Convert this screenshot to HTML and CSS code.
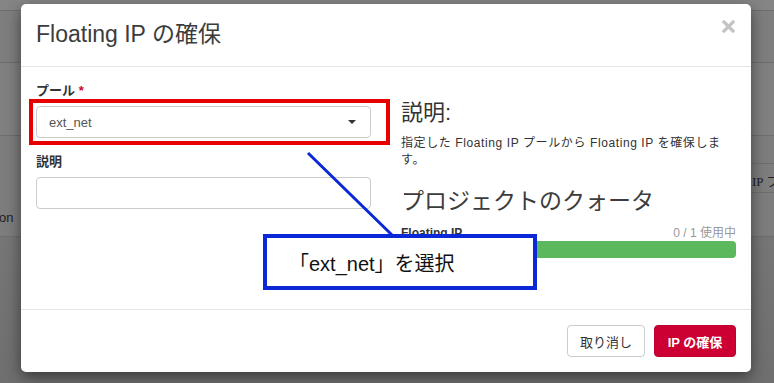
FILE: index.html
```html
<!DOCTYPE html>
<html lang="ja">
<head>
    <meta charset="UTF-8">
    <meta name="viewport" content="width=device-width, initial-scale=1.0">
    <title>Floating IP の確保</title>
    <link rel="stylesheet" href="styles.css">
</head>
<body>
    <!-- Page behind the backdrop -->
    <div class="page">
        <div class="band band-top"></div>
        <div class="band band-nav"></div>
        <div class="band band-head"></div>
        <div class="band band-table">
            <span class="page-text">on</span>
            <span class="page-btn">IP フ</span>
        </div>
        <div class="band band-rest"></div>
    </div>

    <!-- Modal -->
    <div class="modal">
        <div class="modal-header">
            <h4 class="modal-title">Floating IP の確保</h4>
            <svg class="close" width="13" height="13" viewBox="0 0 13 13">
                <path d="M2 2 L11 11 M11 2 L2 11" stroke="#c4c4c4" stroke-width="3.2" stroke-linecap="square"/>
            </svg>
        </div>

        <div class="modal-body">
            <div class="col">
                <div class="form-group">
                    <label class="field-label">プール <span class="required">*</span></label>
                    <div class="select">
                        <span>ext_net</span>
                        <span class="caret"></span>
                    </div>
                </div>
                <div class="form-group">
                    <label class="field-label">説明</label>
                    <div class="text-input"></div>
                </div>
            </div>

            <div class="col">
                <h3 class="help-title">説明:</h3>
                <p class="help-text">指定した Floating IP プールから Floating IP を確保します。</p>
                <h3 class="quota-title">プロジェクトのクォータ</h3>
                <div class="quota-row">
                    <span class="quota-name">Floating IP</span>
                    <span class="quota-usage">0 / 1 使用中</span>
                </div>
                <div class="quota-bar"></div>
            </div>
        </div>

        <div class="modal-footer">
            <button class="btn btn-default">取り消し</button>
            <button class="btn btn-primary">IP の確保</button>
        </div>
    </div>

    <!-- Annotations -->
    <div class="mark-red"></div>
    <svg class="mark-line" width="774" height="383" viewBox="0 0 774 383">
        <line x1="308" y1="153" x2="392" y2="235" stroke="#0a28d8" stroke-width="3"/>
    </svg>
    <div class="mark-note">「ext_net」を選択</div>
</body>
</html>
```

FILE: styles.css
```css
* {
    margin: 0;
    padding: 0;
    box-sizing: border-box;
}

body {
    font-family: 'Liberation Sans', 'Noto Sans CJK JP', sans-serif;
    background: #7a7a7a;
    color: #333;
    width: 774px;
    height: 383px;
    overflow: hidden;
    position: relative;
}

/* Page behind the backdrop */
.page {
    display: flex;
    flex-direction: column;
    height: 383px;
}

.band {
    border-bottom: 1px solid #6e6e6e;
}

.band-top {
    height: 11px;
    background: #858585;
}

.band-nav {
    height: 52px;
    background: #7e7e7e;
}

.band-head {
    height: 73px;
    background: #808080;
}

.band-table {
    height: 101px;
    background: #7d7d7d;
    position: relative;
}

.band-rest {
    flex: 1;
    border-bottom: none;
    background: linear-gradient(to bottom, #767676, #6f6f6f);
}

.page-text {
    position: absolute;
    left: -1px;
    top: 74px;
    font-size: 13px;
    color: #1e1e1e;
}

.page-btn {
    position: absolute;
    left: 744px;
    top: 27px;
    width: 30px;
    height: 30px;
    padding: 7px 0 0 8px;
    border-top: 1px solid #6e6e6e;
    border-bottom: 1px solid #6e6e6e;
    font-family: 'Liberation Serif', 'Noto Sans CJK JP', serif;
    font-size: 13px;
    white-space: nowrap;
    overflow: hidden;
    color: #1e1e1e;
}

/* Modal */
.modal {
    position: absolute;
    left: 21px;
    top: 4px;
    width: 730px;
    background: #fff;
    border-radius: 5px;
    box-shadow: 0 5px 15px rgba(0, 0, 0, 0.5);
}

.modal-header {
    display: flex;
    justify-content: space-between;
    align-items: flex-start;
    padding: 14px 15px 15px;
    border-bottom: 1px solid #e5e5e5;
}

.modal-title {
    font-size: 23px;
    font-weight: normal;
    line-height: 33px;
    color: #3c3c3c;
}

.close {
    margin-top: 2px;
    margin-right: 1px;
}

.modal-body {
    display: flex;
    gap: 30px;
    height: 242px;
    padding: 15px;
}

.col {
    flex: 1;
}

.form-group {
    margin-bottom: 15px;
}

.field-label {
    display: block;
    font-size: 13px;
    font-weight: bold;
    line-height: 18px;
    margin-bottom: 6px;
    color: #333;
}

.required {
    color: #cc0033;
}

.select,
.text-input {
    display: flex;
    align-items: center;
    justify-content: space-between;
    height: 32px;
    padding: 0 14px 0 12px;
    border: 1px solid #ccc;
    border-radius: 4px;
    font-size: 13px;
    color: #555;
}

.caret {
    width: 0;
    height: 0;
    border-left: 4px solid transparent;
    border-right: 4px solid transparent;
    border-top: 4px solid #333;
}

.help-title {
    margin-top: 19px;
    font-size: 22px;
    font-weight: normal;
    line-height: 24px;
    color: #333;
}

.help-text {
    margin-top: 10px;
    font-size: 12px;
    line-height: 17px;
    letter-spacing: 0.6px;
    color: #333;
}

.quota-title {
    margin-top: 20px;
    font-size: 23px;
    font-weight: normal;
    line-height: 24px;
    color: #3c3c3c;
}

.quota-row {
    display: flex;
    justify-content: space-between;
    margin-top: 12px;
    font-size: 12px;
    line-height: 16px;
}

.quota-name {
    font-weight: bold;
    color: #333;
}

.quota-usage {
    color: #999;
}

.quota-bar {
    height: 17px;
    background: #5cb85c;
    border-radius: 4px;
}

.modal-footer {
    display: flex;
    justify-content: flex-end;
    gap: 9px;
    padding: 15px;
    border-top: 1px solid #e5e5e5;
}

.btn {
    height: 32px;
    padding: 0 12px;
    border-radius: 4px;
    font-family: 'Liberation Sans', 'Noto Sans CJK JP', sans-serif;
    font-size: 13px;
}

.btn-default {
    width: 78px;
    background: #fff;
    border: 1px solid #ccc;
    color: #333;
}

.btn-primary {
    width: 82px;
    background: #cc0033;
    border: 1px solid #c0002f;
    color: #fff;
    font-weight: bold;
}

/* Annotations */
.mark-red {
    position: absolute;
    left: 29px;
    top: 99px;
    width: 361px;
    height: 46px;
    border: 4px solid #e60000;
}

.mark-line {
    position: absolute;
    left: 0;
    top: 0;
}

.mark-note {
    position: absolute;
    left: 263px;
    top: 234px;
    width: 274px;
    height: 56px;
    padding-left: 22px;
    display: flex;
    align-items: center;
    background: #fff;
    border: 4px solid #0a28d8;
    font-size: 20px;
    color: #111;
}
```
